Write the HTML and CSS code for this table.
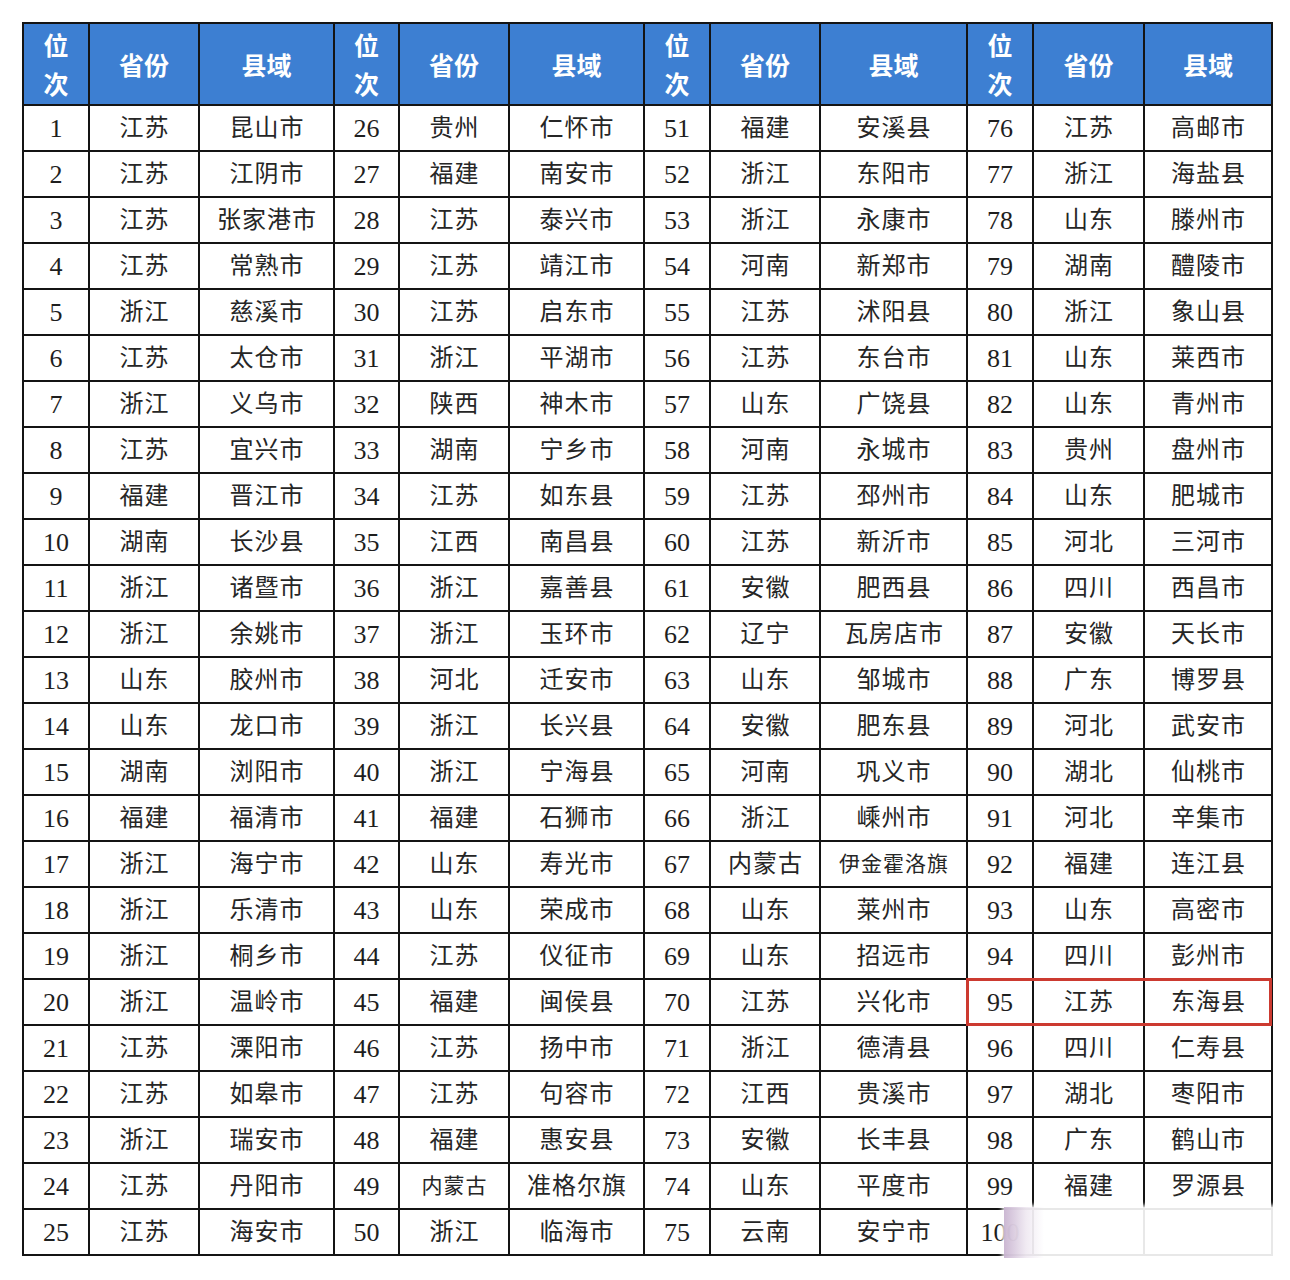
FILE: index.html
```html
<!DOCTYPE html>
<html lang="zh-CN">
<head>
<meta charset="utf-8">
<title>县域排名</title>
<link rel="stylesheet" href="styles.css">
</head>
<body>
<div class="sheet">
<span class="h">位<br>次</span><span class="h">省份</span><span class="h">县域</span>
<span class="h">位<br>次</span><span class="h">省份</span><span class="h">县域</span>
<span class="h">位<br>次</span><span class="h">省份</span><span class="h">县域</span>
<span class="h">位<br>次</span><span class="h">省份</span><span class="h">县域</span>

<span class="n">1</span><span>江苏</span><span>昆山市</span><span class="n">26</span><span>贵州</span><span>仁怀市</span><span class="n">51</span><span>福建</span><span>安溪县</span><span class="n">76</span><span>江苏</span><span>高邮市</span>
<span class="n">2</span><span>江苏</span><span>江阴市</span><span class="n">27</span><span>福建</span><span>南安市</span><span class="n">52</span><span>浙江</span><span>东阳市</span><span class="n">77</span><span>浙江</span><span>海盐县</span>
<span class="n">3</span><span>江苏</span><span>张家港市</span><span class="n">28</span><span>江苏</span><span>泰兴市</span><span class="n">53</span><span>浙江</span><span>永康市</span><span class="n">78</span><span>山东</span><span>滕州市</span>
<span class="n">4</span><span>江苏</span><span>常熟市</span><span class="n">29</span><span>江苏</span><span>靖江市</span><span class="n">54</span><span>河南</span><span>新郑市</span><span class="n">79</span><span>湖南</span><span>醴陵市</span>
<span class="n">5</span><span>浙江</span><span>慈溪市</span><span class="n">30</span><span>江苏</span><span>启东市</span><span class="n">55</span><span>江苏</span><span>沭阳县</span><span class="n">80</span><span>浙江</span><span>象山县</span>
<span class="n">6</span><span>江苏</span><span>太仓市</span><span class="n">31</span><span>浙江</span><span>平湖市</span><span class="n">56</span><span>江苏</span><span>东台市</span><span class="n">81</span><span>山东</span><span>莱西市</span>
<span class="n">7</span><span>浙江</span><span>义乌市</span><span class="n">32</span><span>陕西</span><span>神木市</span><span class="n">57</span><span>山东</span><span>广饶县</span><span class="n">82</span><span>山东</span><span>青州市</span>
<span class="n">8</span><span>江苏</span><span>宜兴市</span><span class="n">33</span><span>湖南</span><span>宁乡市</span><span class="n">58</span><span>河南</span><span>永城市</span><span class="n">83</span><span>贵州</span><span>盘州市</span>
<span class="n">9</span><span>福建</span><span>晋江市</span><span class="n">34</span><span>江苏</span><span>如东县</span><span class="n">59</span><span>江苏</span><span>邳州市</span><span class="n">84</span><span>山东</span><span>肥城市</span>
<span class="n">10</span><span>湖南</span><span>长沙县</span><span class="n">35</span><span>江西</span><span>南昌县</span><span class="n">60</span><span>江苏</span><span>新沂市</span><span class="n">85</span><span>河北</span><span>三河市</span>
<span class="n">11</span><span>浙江</span><span>诸暨市</span><span class="n">36</span><span>浙江</span><span>嘉善县</span><span class="n">61</span><span>安徽</span><span>肥西县</span><span class="n">86</span><span>四川</span><span>西昌市</span>
<span class="n">12</span><span>浙江</span><span>余姚市</span><span class="n">37</span><span>浙江</span><span>玉环市</span><span class="n">62</span><span>辽宁</span><span>瓦房店市</span><span class="n">87</span><span>安徽</span><span>天长市</span>
<span class="n">13</span><span>山东</span><span>胶州市</span><span class="n">38</span><span>河北</span><span>迁安市</span><span class="n">63</span><span>山东</span><span>邹城市</span><span class="n">88</span><span>广东</span><span>博罗县</span>
<span class="n">14</span><span>山东</span><span>龙口市</span><span class="n">39</span><span>浙江</span><span>长兴县</span><span class="n">64</span><span>安徽</span><span>肥东县</span><span class="n">89</span><span>河北</span><span>武安市</span>
<span class="n">15</span><span>湖南</span><span>浏阳市</span><span class="n">40</span><span>浙江</span><span>宁海县</span><span class="n">65</span><span>河南</span><span>巩义市</span><span class="n">90</span><span>湖北</span><span>仙桃市</span>
<span class="n">16</span><span>福建</span><span>福清市</span><span class="n">41</span><span>福建</span><span>石狮市</span><span class="n">66</span><span>浙江</span><span>嵊州市</span><span class="n">91</span><span>河北</span><span>辛集市</span>
<span class="n">17</span><span>浙江</span><span>海宁市</span><span class="n">42</span><span>山东</span><span>寿光市</span><span class="n">67</span><span>内蒙古</span><span class="sm">伊金霍洛旗</span><span class="n">92</span><span>福建</span><span>连江县</span>
<span class="n">18</span><span>浙江</span><span>乐清市</span><span class="n">43</span><span>山东</span><span>荣成市</span><span class="n">68</span><span>山东</span><span>莱州市</span><span class="n">93</span><span>山东</span><span>高密市</span>
<span class="n">19</span><span>浙江</span><span>桐乡市</span><span class="n">44</span><span>江苏</span><span>仪征市</span><span class="n">69</span><span>山东</span><span>招远市</span><span class="n">94</span><span>四川</span><span>彭州市</span>
<span class="n">20</span><span>浙江</span><span>温岭市</span><span class="n">45</span><span>福建</span><span>闽侯县</span><span class="n">70</span><span>江苏</span><span>兴化市</span><span class="n">95</span><span>江苏</span><span>东海县</span>
<span class="n">21</span><span>江苏</span><span>溧阳市</span><span class="n">46</span><span>江苏</span><span>扬中市</span><span class="n">71</span><span>浙江</span><span>德清县</span><span class="n">96</span><span>四川</span><span>仁寿县</span>
<span class="n">22</span><span>江苏</span><span>如皋市</span><span class="n">47</span><span>江苏</span><span>句容市</span><span class="n">72</span><span>江西</span><span>贵溪市</span><span class="n">97</span><span>湖北</span><span>枣阳市</span>
<span class="n">23</span><span>浙江</span><span>瑞安市</span><span class="n">48</span><span>福建</span><span>惠安县</span><span class="n">73</span><span>安徽</span><span>长丰县</span><span class="n">98</span><span>广东</span><span>鹤山市</span>
<span class="n">24</span><span>江苏</span><span>丹阳市</span><span class="n">49</span><span class="sm">内蒙古</span><span>准格尔旗</span><span class="n">74</span><span>山东</span><span>平度市</span><span class="n">99</span><span>福建</span><span>罗源县</span>
<span class="n">25</span><span>江苏</span><span>海安市</span><span class="n">50</span><span>浙江</span><span>临海市</span><span class="n">75</span><span>云南</span><span>安宁市</span><span class="n">100</span><span></span><span></span>

<div class="highlight"></div>
<div class="smudge"></div>
</div>
</body>
</html>
```

FILE: styles.css
```css
html, body {
  margin: 0;
  background: #ffffff;
}

body {
  padding: 22px;
}

.sheet {
  position: relative;
  display: grid;
  grid-template-columns: 64px 108px 133px 63px 108px 133px 64px 108px 145px 64px 109px 126px;
  grid-template-rows: 80px repeat(25, 44px);
  gap: 2px;
  width: max-content;
  background: #141414;
  border: 2px solid #141414;
  font-family: "Liberation Serif", "Noto Sans CJK SC", serif;
}

.sheet > span {
  display: flex;
  align-items: center;
  justify-content: center;
  box-sizing: border-box;
  background: #ffffff;
  color: #262626;
  font-size: 24px;
  letter-spacing: 1px;
  padding: 0 0 5px 1px;
  white-space: nowrap;
}

.sheet > span.n {
  font-size: 26px;
  letter-spacing: 0;
  padding: 1px 0 0 0;
  color: #1e1e1e;
}

.sheet > span.sm {
  font-size: 21px;
  letter-spacing: 1px;
}

.sheet > span.h {
  background: #3d7fd2;
  color: #ffffff;
  font-family: "Noto Sans CJK SC", sans-serif;
  font-weight: 700;
  font-size: 25px;
  line-height: 39px;
  letter-spacing: 0;
  padding: 0;
  text-align: center;
}

.highlight {
  position: absolute;
  left: 942px;
  top: 954px;
  width: 306px;
  height: 48px;
  box-sizing: border-box;
  border: 3px solid #cc3a30;
  pointer-events: none;
}

.smudge {
  position: absolute;
  left: 980px;
  top: 1183px;
  width: 272px;
  height: 51px;
  background:
    linear-gradient(to right, rgba(186, 160, 196, 0.75) 0, rgba(230, 220, 234, 0.6) 22px, rgba(255, 255, 255, 0) 40px),
    rgba(255, 255, 255, 0.9);
  box-shadow: 0 0 4px 2px rgba(255, 255, 255, 0.9);
  pointer-events: none;
}
```
